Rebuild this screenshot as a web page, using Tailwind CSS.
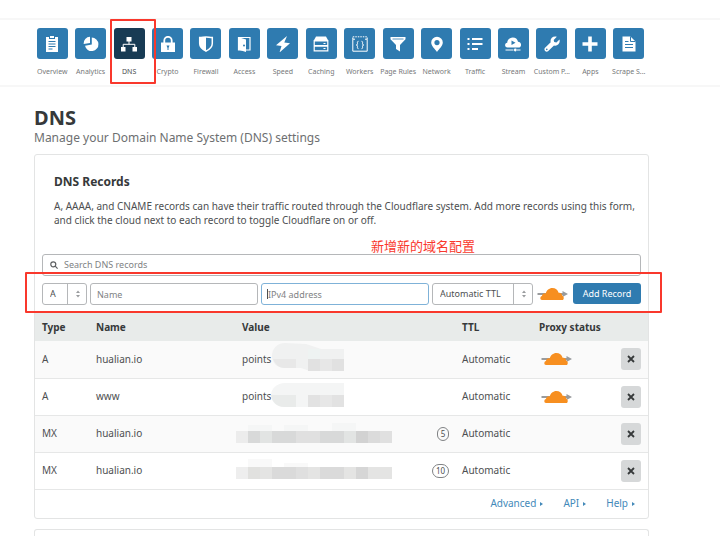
<!DOCTYPE html>
<html lang="en">
<head>
<meta charset="utf-8">
<meta name="viewport" content="width=device-width, initial-scale=1">
<title>DNS</title>
<script src="https://cdn.jsdelivr.net/npm/@tailwindcss/browser@4"></script>
</head>
<body class="bg-white font-['Noto_Sans','Open_Sans','Noto_Sans_CJK_SC',sans-serif] text-[#4d4f51]">
<svg class="hidden" aria-hidden="true">
  <symbol id="cloud" viewBox="0 0 32 14">
    <path d="M0.500 6h25v-2l5.500 3-5.500 3v-2h-25z" fill="#999b9d"/>
    <path d="M5 13c-2.200 0-2.200-3.500 0-4 0-2 2-3.400 3.800-2.600C9.500 3.400 12.200 1 15.300 1c3.200 0 5.500 2 6.300 4.800 2-.4 3.600 1 3.600 2.900 2 .3 2.200 4.300 0 4.300z" fill="#f78f20"/>
  </symbol>
  <symbol id="updown" viewBox="0 0 6 8">
    <path d="M1 3l2-2.500L5 3zM1 5l2 2.500L5 5z" fill="#9a9c9e"/>
  </symbol>
</svg>

<nav aria-label="Main" class="mt-[18px] border-y-2 border-[#f7f7f7] pl-[33px] pr-[72px] pt-2 pb-[7px]">
  <ul class="grid grid-cols-16 text-[7px] leading-[12px] text-[#76787a]">
    <li><a href="#" class="flex flex-col items-center gap-[7px] whitespace-nowrap"><span class="grid size-[31px] place-items-center rounded-[3px] bg-[#2f7bb0]"><svg class="size-4" viewBox="0 0 16 16" fill="#fff"><path d="M2 1h3v2h6V1h3v15H2z"/><path d="M6 0h4v2H6z"/><path d="M4.500 5.500h7M4.500 8h7M4.500 10.500h7M4.500 13h4" stroke="#2f7bb0"/></svg></span>Overview</a></li>
    <li><a href="#" class="flex flex-col items-center gap-[7px] whitespace-nowrap"><span class="grid size-[31px] place-items-center rounded-[3px] bg-[#2f7bb0]"><svg class="size-4" viewBox="0 0 16 16" fill="#fff"><path d="M8.800 1.500A6.800 6.800 0 1 1 2 9.800L8.800 8.500z"/><path d="M7 .8V7L.6 7.900A6.600 6.600 0 0 1 7 .8z"/></svg></span>Analytics</a></li>
    <li class="relative"><a href="#" aria-current="page" class="flex flex-col items-center gap-[7px] whitespace-nowrap text-[#4d4f51]"><span class="grid size-[31px] place-items-center rounded-[3px] bg-[#183b54]"><svg class="size-4" viewBox="0 0 16 16" fill="#fff"><path d="M5.500 1h5v4.500h-5zM0 11h4.500v4.500H0zM11.500 11H16v4.500h-4.500z"/><path d="M2.200 11V8.300h11.600V11M8 5v3.300" fill="none" stroke="#fff"/></svg></span>DNS</a>
      <span class="pointer-events-none absolute -top-[9px] left-0 z-10 h-[65px] w-[46px] rounded-[1px] border-2 border-[#f9382c]"></span></li>
    <li><a href="#" class="flex flex-col items-center gap-[7px] whitespace-nowrap"><span class="grid size-[31px] place-items-center rounded-[3px] bg-[#2f7bb0]"><svg class="size-4" viewBox="0 0 16 16"><path d="M4.300 7V4.500a3.700 3.700 0 0 1 7.400 0V7" fill="none" stroke="#fff" stroke-width="1.800"/><path d="M1 6.500h14V16H1z" fill="#fff"/><path d="M6.500 9.500h3l-1 2.500v2h-1v-2z" fill="#2f7bb0"/></svg></span>Crypto</a></li>
    <li><a href="#" class="flex flex-col items-center gap-[7px] whitespace-nowrap"><span class="grid size-[31px] place-items-center rounded-[3px] bg-[#2f7bb0]"><svg class="size-4" viewBox="0 0 16 16"><path d="M1.700 1.500C4 1.500 6 .9 8 .9s4 .6 6.300.6v6c0 4-3 6-6.300 7.700C4.700 13.500 1.700 11.500 1.700 7.500z" fill="none" stroke="#fff" stroke-width="1.500"/><path d="M8 .9c-2 0-4 .6-6.300.6v6c0 4 3 6 6.300 7.700z" fill="#fff"/></svg></span>Firewall</a></li>
    <li><a href="#" class="flex flex-col items-center gap-[7px] whitespace-nowrap"><span class="grid size-[31px] place-items-center rounded-[3px] bg-[#2f7bb0]"><svg class="size-4" viewBox="0 0 16 16"><path d="M2.500 1.500h11.500v12.500h-11.500z" fill="none" stroke="#fff" stroke-width="1.200"/><path d="M2 1l8 2.500V16l-8-2.500z" fill="#fff"/><circle cx="8" cy="9.500" r="1" fill="#2f7bb0"/></svg></span>Access</a></li>
    <li><a href="#" class="flex flex-col items-center gap-[7px] whitespace-nowrap"><span class="grid size-[31px] place-items-center rounded-[3px] bg-[#2f7bb0]"><svg class="size-4" viewBox="0 0 16 16" fill="#fff"><path d="M12 0L1 9.200l5.500.8L4.500 16.500 15 7.200 9.300 6.400z"/></svg></span>Speed</a></li>
    <li><a href="#" class="flex flex-col items-center gap-[7px] whitespace-nowrap"><span class="grid size-[31px] place-items-center rounded-[3px] bg-[#2f7bb0]"><svg class="size-4" viewBox="0 0 16 16"><path d="M3 .5h10L15.500 5H.5z" fill="#fff"/><path d="M1.200 5h13.600v4.700H1.200zM1.200 10.200h13.600v4.600H1.200z" fill="none" stroke="#fff" stroke-width="1.200"/><path d="M10.500 7.500h2M10.500 12.500h2" stroke="#fff" stroke-width="1.200"/></svg></span>Caching</a></li>
    <li><a href="#" class="flex flex-col items-center gap-[7px] whitespace-nowrap"><span class="grid size-[31px] place-items-center rounded-[3px] bg-[#2f7bb0]"><svg class="size-4" viewBox="0 0 16 16" fill="none" stroke="#fff"><path d="M3 3.200H.8v12h14.400v-12h-2.200"/><path d="M.8 3V.5M15.200 3V.5M.8.8h14.400" stroke-dasharray="1.500 1"/><path d="M6.500 5.300c-1.600 0-1 1.500-1 2.500 0 .8-.5 1.200-1.200 1.200.7 0 1.200.4 1.200 1.200 0 1-.6 2.500 1 2.500M9.500 5.300c1.600 0 1 1.500 1 2.500 0 .8.500 1.200 1.200 1.200-.7 0-1.200.4-1.200 1.200 0 1 .6 2.500-1 2.500" stroke-width=".9"/></svg></span>Workers</a></li>
    <li><a href="#" class="flex flex-col items-center gap-[7px] whitespace-nowrap"><span class="grid size-[31px] place-items-center rounded-[3px] bg-[#2f7bb0]"><svg class="size-4" viewBox="0 0 16 16" fill="#fff"><path d="M.5 1h15v2.300L10 9v6.500L6 13V9L.5 3.300z"/><path d="M2.500 3h11" stroke="#2f7bb0" stroke-width=".8"/></svg></span>Page Rules</a></li>
    <li><a href="#" class="flex flex-col items-center gap-[7px] whitespace-nowrap"><span class="grid size-[31px] place-items-center rounded-[3px] bg-[#2f7bb0]"><svg class="size-4" viewBox="0 0 16 16" fill="#fff"><path fill-rule="evenodd" d="M8 .7a5.800 5.800 0 0 1 5.800 5.800C13.800 10 10 13 8 16 6 13 2.200 10 2.200 6.500A5.800 5.800 0 0 1 8 .7zm0 3.300a2.600 2.600 0 1 0 0 5.200A2.600 2.600 0 0 0 8 4z"/></svg></span>Network</a></li>
    <li><a href="#" class="flex flex-col items-center gap-[7px] whitespace-nowrap"><span class="grid size-[31px] place-items-center rounded-[3px] bg-[#2f7bb0]"><svg class="size-4" viewBox="0 0 16 16" stroke="#fff" stroke-width="2"><path d="M.5 3h2M5 3h10.500M.5 8h2M5 8h10.500M.5 13h2M5 13h6"/></svg></span>Traffic</a></li>
    <li><a href="#" class="flex flex-col items-center gap-[7px] whitespace-nowrap"><span class="grid size-[31px] place-items-center rounded-[3px] bg-[#2f7bb0]"><svg class="size-4" viewBox="0 0 16 16" fill="#fff"><path d="M2.500 11.500C-.8 11.500-.5 7 2.200 6.800 2.300 3.500 5 1.500 7.800 1.500c2.700 0 4.700 1.600 5.200 4.200 4 .2 4 5.800.5 5.800z"/><path d="M6.500 4.500l4 2.300-4 2.300z" fill="#2f7bb0"/><path d="M.5 14h8M12 14h3.500" stroke="#fff"/><circle cx="10.300" cy="14" r="1.400"/></svg></span>Stream</a></li>
    <li><a href="#" class="flex flex-col items-center gap-[7px] whitespace-nowrap"><span class="grid size-[31px] place-items-center rounded-[3px] bg-[#2f7bb0]"><svg class="size-4" viewBox="0 0 16 16" fill="#fff"><path d="M12.800.8L9.700 3.900l.5 2.200 2.200.5 3.100-3.100c1.200 4-2.300 7-5.500 5.900L4 15.300c-1.900 1.400-4.600-1-3.200-3.200L6.700 6.200C5.700 2.800 8.800-.3 12.800.8z"/><circle cx="2.800" cy="13.400" r=".8" fill="#2f7bb0"/></svg></span>Custom P...</a></li>
    <li><a href="#" class="flex flex-col items-center gap-[7px] whitespace-nowrap"><span class="grid size-[31px] place-items-center rounded-[3px] bg-[#2f7bb0]"><svg class="size-4" viewBox="0 0 16 16" fill="#fff"><path d="M6.200.5h3.600v5.700h5.700v3.600H9.800v5.700H6.200V9.800H.5V6.200h5.700z"/></svg></span>Apps</a></li>
    <li><a href="#" class="flex flex-col items-center gap-[7px] whitespace-nowrap"><span class="grid size-[31px] place-items-center rounded-[3px] bg-[#2f7bb0]"><svg class="size-4" viewBox="0 0 16 16"><path d="M1.500.5h8l5 5v10h-13z" fill="#fff"/><path d="M9.500.5v5h5M4 5.500h3.500M4 8.500h8M4 11.500h8" fill="none" stroke="#2f7bb0"/></svg></span>Scrape S...</a></li>
  </ul>
</nav>

<main class="pl-[34px] pr-[71px] pt-5">
  <h1 class="text-[20px] font-bold leading-[22px] text-[#36393a]">DNS</h1>
  <p class="text-[12px] leading-[17px] text-[#6d6f71]">Manage your Domain Name System (DNS) settings</p>

  <section class="mt-2 rounded-[3px] border border-[#e3e4e4] pt-[18px]">
    <div class="pl-[19px] pr-[12px]">
      <h2 class="text-[12px] font-bold leading-[18px] text-[#36393a]">DNS Records</h2>
      <p class="mt-2 text-[10px] leading-[14px]">A, AAAA, and CNAME records can have their traffic routed through the Cloudflare system. Add more records using this form, and click the cloud next to each record to toggle Cloudflare on or off.</p>
    </div>

    <div class="relative mt-[27px] px-[7px]">
      <span lang="zh" class="absolute -top-[17px] left-[336px] text-[13px] leading-[18px] text-[#f9382c] font-['Noto_Sans_CJK_SC',sans-serif]">新增新的域名配置</span>
      <label class="flex h-[22px] items-center gap-1 rounded-[3px] border border-[#b5b7b9] px-[7px]">
        <svg class="size-2" viewBox="0 0 8 8" fill="none" stroke="#5c5e60" stroke-width="1.200"><circle cx="3.300" cy="3.300" r="2.500"/><path d="M5.200 5.200L7.600 7.600"/></svg>
        <input type="search" aria-label="Search DNS records" placeholder="Search DNS records" class="min-w-0 flex-1 pl-[2px] text-[9px] outline-none placeholder:text-[#808284]">
      </label>
    </div>

    <form class="relative mt-[7px] flex h-[22px] items-stretch gap-[3px] px-[7px] text-[9px]">
      <span class="pointer-events-none absolute -left-[10px] -right-[14px] -top-[11px] z-10 h-[41px] rounded-[1px] border-2 border-[#f9382c]"></span>
      <div class="relative w-[45px] shrink-0">
        <select aria-label="Type" class="size-full appearance-none rounded-[3px] border border-[#b5b7b9] bg-white pl-[7px]"><option>A</option></select>
        <span class="pointer-events-none absolute inset-y-0 right-0 grid w-5 place-items-center border-l border-[#b5b7b9]"><svg class="h-2 w-[6px]"><use href="#updown"/></svg></span>
      </div>
      <div class="min-w-0 flex-1">
        <input aria-label="Name" placeholder="Name" class="block size-full rounded-[3px] border border-[#b5b7b9] px-[6px] outline-none placeholder:text-[#808284]">
      </div>
      <div class="relative min-w-0 flex-1">
        <input aria-label="IPv4 address" placeholder="IPv4 address" class="block size-full rounded-[3px] border border-[#7fb2d8] px-[6px] outline-none placeholder:text-[#808284]">
        <span class="pointer-events-none absolute left-[6px] top-[6px] h-[10px] w-px bg-[#4d4f51]"></span>
      </div>
      <div class="relative w-[101px] shrink-0">
        <select aria-label="TTL" class="size-full appearance-none rounded-[3px] border border-[#b5b7b9] bg-white pl-[7px]"><option>Automatic TTL</option></select>
        <span class="pointer-events-none absolute inset-y-0 right-0 grid w-5 place-items-center border-l border-[#b5b7b9]"><svg class="h-2 w-[6px]"><use href="#updown"/></svg></span>
      </div>
      <button type="button" aria-label="Toggle proxy" class="flex w-[34px] shrink-0 items-center justify-center"><svg class="h-[14px] w-8"><use href="#cloud"/></svg></button>
      <button type="button" class="h-[21px] w-[68px] shrink-0 rounded-[3px] bg-[#2f7bb0] text-[9px] text-white">Add Record</button>
    </form>

    <table class="mt-2 w-full table-fixed text-left text-[10px]">
      <colgroup><col class="w-[54px]"><col class="w-[146px]"><col><col class="w-[77px]"><col class="w-[78px]"><col class="w-[38px]"></colgroup>
      <thead class="bg-[#e8ebea] text-[#36393a]">
        <tr class="h-7">
          <th class="pl-[7px]">Type</th><th class="pl-[7px]">Name</th><th class="pl-[7px]">Value</th><th class="pl-[7px]">TTL</th><th colspan="2" class="pl-[7px]">Proxy status</th>
        </tr>
      </thead>
      <tbody>
        <tr class="h-[37px] border-b border-[#e6e7e7] bg-[#fafafa]">
          <td class="pl-[7px]">A</td><td class="pl-[7px]">hualian.io</td>
          <td class="pl-[7px]"><div class="flex items-center">points<svg class="mb-1 h-7 w-[76px]" viewBox="0 0 76 28"><path d="M14 0C6 0 1 6 1 13s5 12 13 12h16l9 3h34V6H50L35 1z" fill="#f0f1f1"/><path d="M37 6h12v10H37z" fill="#eef3f2"/><path d="M2 16h23v9H13C8 25 4 21 2 16z" fill="#e8e8e8"/><path d="M37 16h12v12H37zM61 16h12v12H61z" fill="#e1e1e1"/><path d="M49 16h12v12H49z" fill="#e7e7e7"/></svg></div></td>
          <td class="pl-[7px]">Automatic</td>
          <td class="pl-[9px]"><svg class="h-[14px] w-8" role="img" aria-label="Proxied"><use href="#cloud"/></svg></td>
          <td class="pr-[7px]"><button type="button" aria-label="Delete" class="ml-auto grid h-[22px] w-5 place-items-center rounded-[3px] bg-[#d6d8d9]"><svg class="size-2" viewBox="0 0 8 8" stroke="#36393a" stroke-width="1.800"><path d="M1 1l6 6M7 1L1 7"/></svg></button></td>
        </tr>
        <tr class="h-[37px] border-b border-[#e6e7e7]">
          <td class="pl-[7px]">A</td><td class="pl-[7px]">www</td>
          <td class="pl-[7px]"><div class="flex items-center">points<svg class="mb-1 h-7 w-[76px]" viewBox="0 0 76 28"><path d="M14 2C6 2 0 8 0 14s5 12 13 12h60V2z" fill="#f4f5f5"/><path d="M0 14h25v12H13C6 26 1 21 0 14z" fill="#e9ebea"/><path d="M37 14h12v12H37zM61 14h12v12H61z" fill="#e2e2e2"/><path d="M49 14h12v12H49z" fill="#e7e7e7"/></svg></div></td>
          <td class="pl-[7px]">Automatic</td>
          <td class="pl-[9px]"><svg class="h-[14px] w-8" role="img" aria-label="Proxied"><use href="#cloud"/></svg></td>
          <td class="pr-[7px]"><button type="button" aria-label="Delete" class="ml-auto grid h-[22px] w-5 place-items-center rounded-[3px] bg-[#d6d8d9]"><svg class="size-2" viewBox="0 0 8 8" stroke="#36393a" stroke-width="1.800"><path d="M1 1l6 6M7 1L1 7"/></svg></button></td>
        </tr>
        <tr class="h-[37px] border-b border-[#e6e7e7] bg-[#fafafa]">
          <td class="pl-[7px]">MX</td><td class="pl-[7px]">hualian.io</td>
          <td class="pl-px pr-[6px]"><div class="flex items-center justify-between"><svg class="mb-[2px] h-6 w-[156px]" viewBox="0 0 156 24"><path d="M12 4h24v6H12zM48 4h24v6H48zM96 2h24v8H96z" fill="#f5f6f6"/><path d="M0 10h12v12H0z" fill="#ececec"/><path d="M12 10h144v12H12z" fill="#e0e0e0"/><path d="M12 10h12v12H12zM36 10h24v12H36zM84 10h24v12H84z" fill="#d8d9d9"/><path d="M120 10h12v12h-12z" fill="#d2d2d2"/><path d="M132 10h12v12h-12z" fill="#dbdbdb"/><path d="M24 10h12v12H24zM108 10h12v12h-12z" fill="#e2e4e3"/></svg><span class="grid h-[14px] w-3 place-items-center rounded-full border border-[#808284] text-[8px] leading-[12px]">5</span></div></td>
          <td class="pl-[7px]">Automatic</td><td></td>
          <td class="pr-[7px]"><button type="button" aria-label="Delete" class="ml-auto grid h-[22px] w-5 place-items-center rounded-[3px] bg-[#d6d8d9]"><svg class="size-2" viewBox="0 0 8 8" stroke="#36393a" stroke-width="1.800"><path d="M1 1l6 6M7 1L1 7"/></svg></button></td>
        </tr>
        <tr class="h-[37px] border-b border-[#e6e7e7]">
          <td class="pl-[7px]">MX</td><td class="pl-[7px]">hualian.io</td>
          <td class="pl-px pr-[6px]"><div class="flex items-center justify-between"><svg class="mb-[2px] h-6 w-[156px]" viewBox="0 0 156 24"><path d="M12 1h24v8H12zM48 5h24v4H48z" fill="#f9f9f9"/><path d="M0 9h12v12H0z" fill="#eee"/><path d="M12 9h144v12H12z" fill="#e4e4e3"/><path d="M36 9h24v12H36zM84 9h24v12H84z" fill="#dadada"/><path d="M120 9h12v12h-12z" fill="#d6d6d6"/><path d="M12 9h12v12H12z" fill="#e1e1df"/><path d="M60 9h12v12H60z" fill="#dfdfdf"/></svg><span class="grid h-[14px] w-[17px] place-items-center rounded-full border border-[#808284] text-[8px] leading-[12px]">10</span></div></td>
          <td class="pl-[7px]">Automatic</td><td></td>
          <td class="pr-[7px]"><button type="button" aria-label="Delete" class="ml-auto grid h-[22px] w-5 place-items-center rounded-[3px] bg-[#d6d8d9]"><svg class="size-2" viewBox="0 0 8 8" stroke="#36393a" stroke-width="1.800"><path d="M1 1l6 6M7 1L1 7"/></svg></button></td>
        </tr>
      </tbody>
    </table>

    <div class="flex h-7 items-center justify-end gap-5 pr-[13px] text-[10px] text-[#4389b9]">
      <a href="#" class="flex items-center gap-1">Advanced<svg class="h-1 w-[3px]" viewBox="0 0 3 4" fill="currentColor"><path d="M0 0l3 2-3 2z"/></svg></a>
      <a href="#" class="flex items-center gap-1">API<svg class="h-1 w-[3px]" viewBox="0 0 3 4" fill="currentColor"><path d="M0 0l3 2-3 2z"/></svg></a>
      <a href="#" class="flex items-center gap-1">Help<svg class="h-1 w-[3px]" viewBox="0 0 3 4" fill="currentColor"><path d="M0 0l3 2-3 2z"/></svg></a>
    </div>
  </section>
  <section class="mt-[10px] h-[7px] rounded-t-[3px] border border-b-0 border-[#e3e4e4]"></section>
</main>
</body>
</html>
